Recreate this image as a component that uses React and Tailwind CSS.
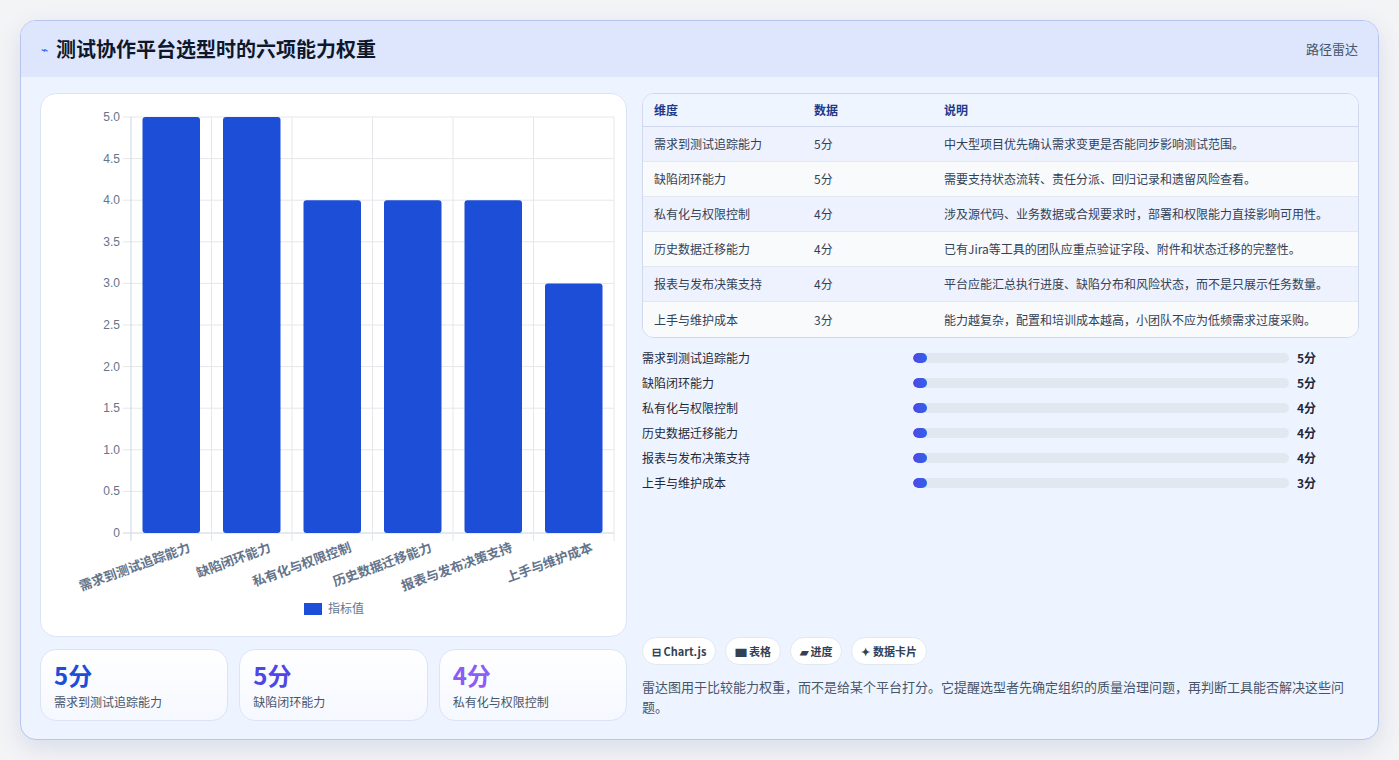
import React from 'react';

const items = [
  { name: '需求到测试追踪能力', v: 5, desc: '中大型项目优先确认需求变更是否能同步影响测试范围。' },
  { name: '缺陷闭环能力', v: 5, desc: '需要支持状态流转、责任分派、回归记录和遗留风险查看。' },
  { name: '私有化与权限控制', v: 4, desc: '涉及源代码、业务数据或合规要求时，部署和权限能力直接影响可用性。' },
  { name: '历史数据迁移能力', v: 4, desc: '已有Jira等工具的团队应重点验证字段、附件和状态迁移的完整性。' },
  { name: '报表与发布决策支持', v: 4, desc: '平台应能汇总执行进度、缺陷分布和风险状态，而不是只展示任务数量。' },
  { name: '上手与维护成本', v: 3, desc: '能力越复杂，配置和培训成本越高，小团队不应为低频需求过度采购。' },
];

const font = { fontFamily: '"Noto Sans CJK SC", "Noto Sans", sans-serif' };

const Chart = () => {
  const L = 90, R = 573, T = 23, B = 439;
  const step = (B - T) / 10;
  const cw = (R - L) / 6;
  return (
    <svg width="586" height="544" className="block" style={font}>
      {Array.from({ length: 11 }).map((_, i) => {
        const y = B - i * step;
        return (
          <g key={i}>
            <line x1={L - 8} x2={R} y1={y} y2={y} stroke={i === 0 ? '#cbd5e1' : '#e5e7eb'} />
            <text x={L - 11} y={y + 4} textAnchor="end" fontSize="12" fill="#64748b" fontFamily="Liberation Sans, sans-serif">
              {i === 0 ? '0' : (i / 2).toFixed(1)}
            </text>
          </g>
        );
      })}
      {Array.from({ length: 7 }).map((_, i) => (
        <line key={i} x1={L + i * cw} x2={L + i * cw} y1={T} y2={B + 8} stroke={i === 0 ? '#cbd5e1' : '#e5e7eb'} />
      ))}
      {items.map((it, i) => {
        const x = L + i * cw + 11.5;
        const h = it.v * 2 * step;
        return <rect key={i} x={x} y={B - h} width={57.5} height={h} rx="3" fill="#1d4ed8" />;
      })}
      {items.map((it, i) => {
        const cx = L + i * cw + cw / 2 + 20;
        return (
          <text key={i} x={cx} y={B + 18} textAnchor="end" fontSize="13" fontWeight="600" fill="#64748b" transform={`rotate(-20 ${cx} ${B + 18})`}>
            {it.name}
          </text>
        );
      })}
      <rect x="263" y="509" width="18" height="12" fill="#1d4ed8" />
      <text x="287" y="519" fontSize="12" fill="#64748b">指标值</text>
    </svg>
  );
};

export default function App() {
  return (
    <div className="w-[1399px] h-[760px] bg-[#f3f4f6] p-[20px]" style={font}>
      <div className="w-[1359px] h-[720px] rounded-2xl border border-[#b9c5ee] bg-[#eef4ff] overflow-hidden shadow-[0_8px_24px_rgba(30,58,138,0.12)] flex flex-col">
        <div className="h-[56px] bg-[#dde6fd] flex items-center justify-between px-[20px] shrink-0">
          <div className="flex items-center gap-[8px]">
            <span className="text-[#2563eb] text-[12px]">⌁</span>
            <span className="text-[20px] font-bold text-[#0f172a]">测试协作平台选型时的六项能力权重</span>
          </div>
          <span className="text-[13px] text-[#475569]">路径雷达</span>
        </div>
        <div className="flex gap-[15px] px-[19px] pt-[16px]">
          <div className="w-[587px] flex flex-col gap-[12px]">
            <div className="h-[544px] bg-white rounded-2xl border border-[#dbe4f5]">
              <Chart />
            </div>
            <div className="grid grid-cols-3 gap-[11px]">
              {[['#1d4ed8', 0], ['#4f46e5', 1], ['#8b5cf6', 2]].map(([c, i]) => (
                <div key={i} className="h-[72px] rounded-2xl border border-[#dbe4f5] bg-gradient-to-b from-white to-[#f5f8ff] px-[13px] pt-[10px]">
                  <div className="text-[24px] font-bold leading-[30px]" style={{ color: c }}>{items[i].v}分</div>
                  <div className="text-[12px] text-[#475569] mt-[3px]">{items[i].name}</div>
                </div>
              ))}
            </div>
          </div>
          <div className="flex-1 flex flex-col">
            <div className="rounded-xl border border-[#cfd8ec] bg-white overflow-hidden">
              <div className="h-[33px] flex items-center text-[12px] font-bold text-[#1e3a8a] bg-[#eff5ff] border-b border-[#cfd8ec]">
                <div className="w-[171px] pl-[11px]">维度</div>
                <div className="w-[130px]">数据</div>
                <div className="flex-1">说明</div>
              </div>
              {items.map((it, i) => (
                <div key={i} className={`h-[35px] flex items-center text-[12px] text-[#334155] ${i % 2 === 0 ? 'bg-[#eef2fe]' : 'bg-[#f8fafc]'} ${i < 5 ? 'border-b border-[#e2e8f0]' : ''}`}>
                  <div className="w-[171px] pl-[11px]">{it.name}</div>
                  <div className="w-[130px]">{it.v}分</div>
                  <div className="flex-1">{it.desc}</div>
                </div>
              ))}
            </div>
            <div className="flex flex-col gap-[9px] mt-[12px]">
              {items.map((it, i) => (
                <div key={i} className="h-[16px] flex items-center text-[12px] text-[#1e293b]">
                  <div className="w-[271px]">{it.name}</div>
                  <div className="w-[376px] h-[10px] rounded-full bg-[#e2e8f0] overflow-hidden">
                    <div className="w-[14px] h-full rounded-full bg-gradient-to-r from-[#4f46e5] to-[#2563eb]" />
                  </div>
                  <div className="ml-[8px] font-bold">{it.v}分</div>
                </div>
              ))}
            </div>
            <div className="flex gap-[9px] mt-[146px]">
              {['⊟ Chart.js', '▆ 表格', '▰ 进度', '✦ 数据卡片'].map((t) => (
                <div key={t} className="h-[28px] px-[9px] rounded-full bg-white border border-[#e2e8f0] flex items-center text-[11px] font-bold text-[#334155]">{t}</div>
              ))}
            </div>
            <p className="mt-[12px] text-[13px] leading-[20px] text-[#475569]">
              雷达图用于比较能力权重，而不是给某个平台打分。它提醒选型者先确定组织的质量治理问题，再判断工具能否解决这些问题。
            </p>
          </div>
        </div>
      </div>
    </div>
  );
}
